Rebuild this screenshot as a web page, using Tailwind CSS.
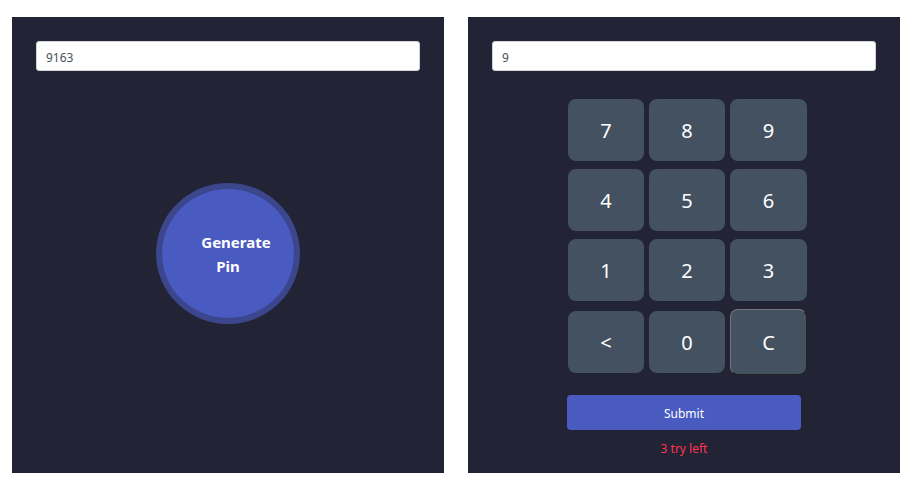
<!DOCTYPE html>
<html lang="en">
<head>
<meta charset="utf-8">
<meta name="viewport" content="width=device-width, initial-scale=1">
<title>Pin Matcher</title>
<script src="https://cdn.jsdelivr.net/npm/@tailwindcss/browser@4"></script>
</head>
<body class="bg-white font-['Noto_Sans','Open_Sans',sans-serif] text-white">
<main class="grid grid-cols-2 gap-6 pt-[17px] pb-3 pl-3 pr-5">
  <section class="flex flex-col bg-[#222334] p-6" aria-label="Pin generator">
    <input type="text" aria-label="Generated pin" value="9163" class="h-[30px] w-full rounded-[3px] border border-[#ced4da] bg-white px-[9px] pt-0.5 text-xs text-[#495057]">
    <div class="flex justify-center pt-28">
      <button type="button" class="h-[141px] w-36 rounded-[50%] border-6 border-[#3b468c] bg-[#495ac1] px-5 indent-4 text-[15px] leading-6 font-bold">Generate Pin</button>
    </div>
  </section>
  <section class="flex flex-col items-center bg-[#222334] px-6 pt-6 pb-[14px]" aria-label="Pin entry">
    <input type="text" aria-label="Entered pin" value="9" class="h-[30px] w-full rounded-[3px] border border-[#ced4da] bg-white px-[9px] pt-0.5 text-xs text-[#495057]">
    <div class="w-full pt-7 pl-2">
      <div class="mx-auto grid w-60 grid-cols-[76px_76px_77px] items-center gap-x-[5px] gap-y-2 text-xl">
        <button type="button" class="h-[62px] rounded-lg bg-[#445161] pt-0.5">7</button>
        <button type="button" class="h-[62px] rounded-lg bg-[#445161] pt-0.5">8</button>
        <button type="button" class="h-[62px] rounded-lg bg-[#445161] pt-0.5">9</button>
        <button type="button" class="h-[62px] rounded-lg bg-[#445161] pt-0.5">4</button>
        <button type="button" class="h-[62px] rounded-lg bg-[#445161] pt-0.5">5</button>
        <button type="button" class="h-[62px] rounded-lg bg-[#445161] pt-0.5">6</button>
        <button type="button" class="h-[62px] rounded-lg bg-[#445161] pt-0.5">1</button>
        <button type="button" class="h-[62px] rounded-lg bg-[#445161] pt-0.5">2</button>
        <button type="button" class="h-[62px] rounded-lg bg-[#445161] pt-0.5">3</button>
        <button type="button" class="h-[62px] rounded-lg bg-[#445161] pt-0.5">&lt;</button>
        <button type="button" class="h-[62px] rounded-lg bg-[#445161] pt-0.5">0</button>
        <button type="button" class="h-[66px] rounded-lg border border-t-[#767676] border-l-[#767676] border-r-[#212121] border-b-[#212121] bg-[#445161] pt-0.5">C</button>
      </div>
    </div>
    <button type="submit" class="mt-5 h-[35px] w-[234px] rounded bg-[#495ac1] pt-0.5 text-xs">Submit</button>
    <p class="pt-[9px] text-xs leading-5 text-[#ff3352]">3 try left</p>
  </section>
</main>
</body>
</html>
